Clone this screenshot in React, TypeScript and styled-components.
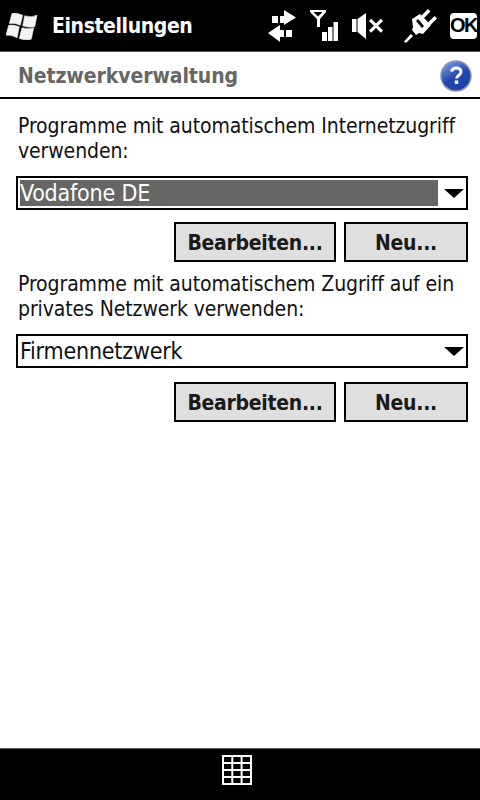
import React from "react";
import styled, { createGlobalStyle } from "styled-components";

const FONT = `"DejaVu Sans Condensed", "DejaVu Sans", Verdana, sans-serif`;

const Global = createGlobalStyle`
  html, body { margin: 0; padding: 0; background: #fff; }
  body { font-family: ${FONT}; font-stretch: condensed; }
`;

const Screen = styled.div`
  width: 480px;
  height: 800px;
  display: flex;
  flex-direction: column;
  overflow: hidden;
  background: #fff;
`;

const TopBar = styled.div`
  height: 51px;
  flex: none;
  display: flex;
  align-items: center;
  background: #000;
  border-bottom: 1px solid #555;
  color: #fff;
`;

const StartFlag = styled.svg`
  width: 32px;
  height: 28px;
  margin-left: 6px;
  flex: none;
`;

const TopTitle = styled.div`
  margin-left: 14px;
  font-size: 21px;
  font-weight: 700;
  letter-spacing: -0.4px;
  flex: 1;
`;

const StatusIcon = styled.svg<{ $left: number }>`
  flex: none;
  margin-left: ${(p) => p.$left}px;
`;

const OkBadge = styled.div`
  width: 27px;
  height: 26px;
  flex: none;
  margin: 0 3px 0 13px;
  border-radius: 4px;
  background: #fff;
  color: #000;
  display: flex;
  align-items: center;
  justify-content: center;
  font-family: "Liberation Sans", Arial, sans-serif;
  font-size: 20px;
  font-weight: 700;
  letter-spacing: -1.6px;
`;

const SubHeader = styled.div`
  height: 45px;
  flex: none;
  display: flex;
  align-items: center;
  justify-content: space-between;
  padding: 0 8px 0 18px;
  border-bottom: 2px solid #000;
`;

const SubTitle = styled.div`
  margin-top: 2px;
  font-size: 21px;
  font-weight: 700;
  letter-spacing: -0.08px;
  color: #666764;
`;

const HelpIcon = styled.svg`
  margin-top: 3px;
`;

const Body = styled.div`
  flex: 1;
  display: flex;
  flex-direction: column;
  padding: 14px 12px 0 16px;
`;

const Label = styled.div`
  margin-left: 2px;
  padding-top: 1px;
  font-size: 21px;
  line-height: 25px;
  letter-spacing: -0.1px;
  color: #111;
`;

const Select = styled.div`
  margin-top: 12px;
  height: 34px;
  box-sizing: border-box;
  border: 2px solid #000;
  display: flex;
  align-items: stretch;
  padding: 2px 0 2px 2px;
`;

const SelectValue = styled.div<{ $selected?: boolean }>`
  flex: 1;
  display: flex;
  align-items: center;
  font-size: 23px;
  letter-spacing: -0.2px;
  color: ${(p) => (p.$selected ? "#fff" : "#111")};
  background: ${(p) => (p.$selected ? "#666764" : "transparent")};
`;

const Arrow = styled.div`
  width: 28px;
  flex: none;
  box-sizing: border-box;
  padding-left: 4px;
  display: flex;
  align-items: center;
  justify-content: center;
  &::after {
    content: "";
    border-left: 10px solid transparent;
    border-right: 10px solid transparent;
    border-top: 9px solid #000;
  }
`;

const ButtonRow = styled.div<{ $top: number }>`
  display: flex;
  justify-content: flex-end;
  gap: 8px;
  margin-top: ${(p) => p.$top}px;
  margin-bottom: 9px;
`;

const Button = styled.div<{ $width: number }>`
  width: ${(p) => p.$width}px;
  height: 40px;
  box-sizing: border-box;
  border: 2px solid #000;
  padding-top: 1px;
  background: #dfdfdf;
  color: #1a1a1a;
  display: flex;
  align-items: center;
  justify-content: center;
  font-size: 21px;
  font-weight: 700;
  letter-spacing: -0.3px;
`;

const BottomBar = styled.div`
  height: 52px;
  flex: none;
  box-sizing: border-box;
  background: #000;
  border-top: 1px solid #666;
  padding-bottom: 9px;
  display: flex;
  align-items: center;
  justify-content: center;
`;

const GridIcon = styled.svg`
  margin-right: 6px;
`;

function Flag() {
  return (
    <StartFlag viewBox="0 0 32 28">
      <g fill="#f4f4f4" stroke="#f4f4f4" strokeWidth="0.6" strokeLinejoin="round">
        <path d="M6 1.500Q11 .5 16.700 3.200L14.300 13.200Q9 10.500 3.300 11.500z" />
        <path d="M18.700 3.800Q25 6 31 3.200L28.700 14.800Q22 16 16.700 13.800z" />
        <path d="M2.700 13.200Q8 12.500 13.300 14.800L11 25.800Q6 22.500 0 23.200z" />
        <path d="M16 15.800Q22 17.500 27.700 15.800L25.300 27.200Q19 28.500 13.300 26.500z" />
      </g>
    </StartFlag>
  );
}

function Help() {
  return (
    <HelpIcon width="32" height="32" viewBox="0 0 32 32">
      <defs>
        <linearGradient id="helpBlue" x1="0.2" y1="0" x2="0.8" y2="1">
          <stop offset="0" stopColor="#7f9fe0" />
          <stop offset="0.5" stopColor="#2447b0" />
          <stop offset="1" stopColor="#1b3fa8" />
        </linearGradient>
      </defs>
      <circle cx="16" cy="16" r="15" fill="url(#helpBlue)" stroke="#8a96b0" strokeWidth="1.500" />
      <path
        d="M11.500 11.500c.5-2.500 2.500-3.500 4.800-3.500 3 0 4.700 1.700 4.700 4 0 3.500-4.500 3.500-4.500 6.500"
        fill="none"
        stroke="#fff"
        strokeWidth="3"
      />
      <rect x="14.800" y="20.500" width="3.400" height="3.400" fill="#fff" />
    </HelpIcon>
  );
}

export default function App() {
  return (
    <Screen>
      <Global />
      <TopBar>
        <Flag />
        <TopTitle>Einstellungen</TopTitle>
        {/* sync arrows */}
        <StatusIcon $left={0} width="29" height="32" viewBox="0 0 29 32" fill="#fff">
          <path d="M4 6h6v7H4zM12 6h4V0l12 7.500L16 15v-2h-4z" />
          <path d="M18 20h6v7h-6zM16 20h-4v-5L0 23l12 9v-5h4z" />
        </StatusIcon>
        {/* signal */}
        <StatusIcon $left={13} width="29" height="32" viewBox="0 0 29 32" fill="#fff">
          <path fillRule="evenodd" d="M0 0h16v2l-6 7v8H7V9L0 2zM3.500 2L8 6.500 12.500 2z" />
          <path d="M12 22h5v9h-5zM18 17h4.500v14H18zM23.500 12H28v19h-4.500z" />
        </StatusIcon>
        {/* muted speaker */}
        <StatusIcon $left={13} width="32" height="26" viewBox="0 0 32 26" fill="#fff">
          <path d="M0 6h4.500v13H0zM5.500 6L14 0v26L5.500 19z" />
          <path d="M17 8l2.200-2.200 4.800 4.800 4.800-4.800L31 8l-4.800 4.800 4.800 4.800-2.200 2.200-4.800-4.800-4.800 4.800-2.200-2.200 4.800-4.800z" />
        </StatusIcon>
        {/* usb plug */}
        <StatusIcon $left={19} width="34" height="36" viewBox="0 0 34 36" fill="#fff">
          <path d="M1 34.500L8 27l2 2-7 7z" transform="translate(0 -1)" />
          <path fillRule="evenodd" d="M9 11l8-5 11 11-8 9-4-1-3 2-4-5 1-3zM15 11l-2 2 6 7 2-2z" />
          <path d="M18 8l7-7 2.500 2.500-7 7zM24.500 15l7-7 2.500 2.500-7 7z" />
        </StatusIcon>
        <OkBadge>OK</OkBadge>
      </TopBar>
      <SubHeader>
        <SubTitle>Netzwerkverwaltung</SubTitle>
        <Help />
      </SubHeader>
      <Body>
        <Label>
          Programme mit automatischem Internetzugriff
          <br />
          verwenden:
        </Label>
        <Select>
          <SelectValue $selected>Vodafone DE</SelectValue>
          <Arrow />
        </Select>
        <ButtonRow $top={12}>
          <Button $width={162}>Bearbeiten...</Button>
          <Button $width={124}>Neu...</Button>
        </ButtonRow>
        <Label>
          Programme mit automatischem Zugriff auf ein
          <br />
          privates Netzwerk verwenden:
        </Label>
        <Select>
          <SelectValue>Firmennetzwerk</SelectValue>
          <Arrow />
        </Select>
        <ButtonRow $top={14}>
          <Button $width={162}>Bearbeiten...</Button>
          <Button $width={124}>Neu...</Button>
        </ButtonRow>
      </Body>
      <BottomBar>
        <GridIcon width="30" height="30" viewBox="0 0 30 30" fill="none" stroke="#fff" strokeWidth="2">
          <path d="M1 1h28v28H1zM10.300 1v28M19.600 1v28M1 8h28M1 15h28M1 22h28" />
        </GridIcon>
      </BottomBar>
    </Screen>
  );
}
